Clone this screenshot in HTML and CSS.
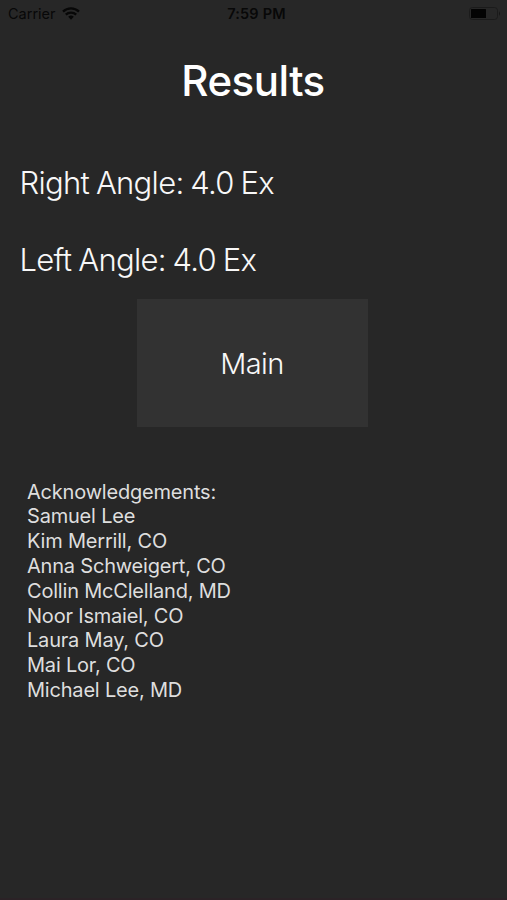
FILE: index.html
```html
<!DOCTYPE html>
<html lang="en">
<head>
<meta charset="utf-8">
<title>Results</title>
<link rel="stylesheet" href="styles.css">
</head>
<body>
<header class="status">
  <div class="carrier"><span>Carrier</span>
    <svg class="wifi" viewBox="0 0 18 13" width="18" height="13" fill="none" stroke="#070707" stroke-width="2.3"><path d="M1 4.7a11.5 11.5 0 0 1 16 0M3.8 7.7a7.5 7.5 0 0 1 10.4 0"/><path d="M6.2 9.8a4.1 4.1 0 0 1 5.6 0L9 12.7z" fill="#070707" stroke="none"/></svg>
  </div>
  <time class="time">7:59 PM</time>
  <svg class="battery" viewBox="0 0 32 13" width="32" height="13"><rect x=".5" y=".5" width="28" height="12" rx="3" fill="none" stroke="#1b1b1b"/><rect x="2" y="2" width="15" height="9" rx=".5" fill="#030303"/><path d="M30 4.2q2 2.3 0 4.6z" fill="#161616"/></svg>
</header>
<main>
  <h1 class="title">Results</h1>
  <p class="angle right">Right Angle: 4.0 Ex</p>
  <p class="angle left">Left Angle: 4.0 Ex</p>
  <button class="main-button">Main</button>
  <section class="credits">
    <div>Acknowledgements:</div>
    <div>Samuel Lee</div>
    <div>Kim Merrill, CO</div>
    <div>Anna Schweigert, CO</div>
    <div>Collin McClelland, MD</div>
    <div>Noor Ismaiel, CO</div>
    <div>Laura May, CO</div>
    <div>Mai Lor, CO</div>
    <div>Michael Lee, MD</div>
  </section>
</main>
</body>
</html>
```
FILE: styles.css
```css
* { box-sizing: border-box; }
body { margin: 0; height: 900px; overflow: hidden; background: #272727; color: #fff; font-family: Inter, sans-serif; border-bottom: 2px solid #2b2226; }
.status { height: 27px; padding: 0 6px 0 8px; display: grid; grid-template-columns: 1fr auto 1fr; align-items: center; color: #080808; font-size: 14.5px; }
.carrier { display: flex; align-items: center; gap: 6px; }
.wifi { margin-top: -1px; }
.time { font-weight: 600; letter-spacing: .2px; padding-left: 4px; }
.battery { justify-self: end; margin-top: -1px; }
.title { margin: 27px 0 0; padding-right: 1px; height: 54px; line-height: 54px; font-size: 42px; font-weight: 550; letter-spacing: -.5px; text-align: center; }
.angle { margin: 0; padding-left: 19.5px; height: 40px; line-height: 40px; font-size: 31px; font-weight: 300; letter-spacing: -.7px; word-spacing: -1.2px; color: #f8f8f8; }
.right { margin-top: 55px; }
.left { margin-top: 37px; }
.main-button { display: block; margin: 19px 0 0 137px; width: 231px; height: 128px; padding: 0 1px 0 0; border: 0; background: #323232; color: #f8f8f8; font: 350 29px Inter, sans-serif; letter-spacing: -.6px; }
.credits { margin: 52.6px 0 0 27px; font-size: 20px; line-height: 24.8px; letter-spacing: -.2px; color: #dedede; }
```
